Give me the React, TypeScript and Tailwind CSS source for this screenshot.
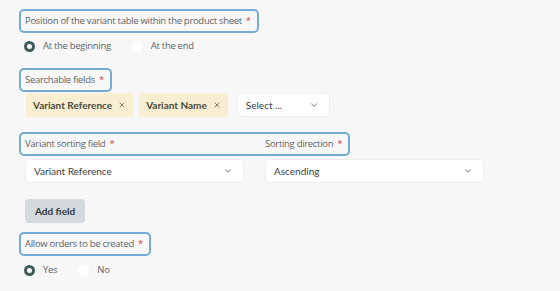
import { ChevronDown, X } from "lucide-react";

const label =
  "font-['Open_Sans',sans-serif] text-[9.5px] leading-4 tracking-[-0.3px] text-[#5f6468]";
const value = "font-['Lato',sans-serif] text-[10px] text-[#3a3d40]";

function Req() {
  return <span className="ml-1 text-[#d0453f]">*</span>;
}

function Outline({ children }: { children: React.ReactNode }) {
  return (
    <div className="flex h-6 w-fit items-center rounded-[5px] border-2 border-[#72acd4] pl-1 pr-1.5">
      {children}
    </div>
  );
}

function Radio({ checked, text }: { checked: boolean; text: string }) {
  return (
    <label className="flex h-4 items-center gap-2">
      <span
        className={
          checked
            ? "h-[11px] w-[11px] rounded-full border-[3px] border-[#3f5b5c] bg-white"
            : "h-[11px] w-[11px] rounded-full bg-white"
        }
      />
      <span className={label + " text-[#3f4447]"}>{text}</span>
    </label>
  );
}

function Chip({ text }: { text: string }) {
  return (
    <span className="flex h-6 items-center gap-1.5 bg-[#f8eed1] px-[7px] font-['Lato',sans-serif] text-[10px] font-bold text-[#4b4a3e]">
      {text}
      <X size={8} strokeWidth={2.5} className="text-[#6b6a5c]" />
    </span>
  );
}

function Select({ text, w }: { text: string; w: string }) {
  return (
    <div
      className={`flex h-6 items-center justify-between rounded-sm border border-[#ededed] bg-white pl-2 pr-2.5 ${w}`}
    >
      <span className={value}>{text}</span>
      <ChevronDown size={10} strokeWidth={2} className="text-[#555]" />
    </div>
  );
}

export default function App() {
  return (
    <div className="h-[291px] w-[560px] bg-[#f7f7f7] pl-[19px] pt-[9px]">
      <Outline>
        <span className={label}>
          Position of the variant table within the product sheet
          <Req />
        </span>
      </Outline>
      <div className="ml-[5px] mt-[5px] flex gap-[21px]">
        <Radio checked text="At the beginning" />
        <Radio checked={false} text="At the end" />
      </div>

      <div className="mt-[14px]">
        <Outline>
          <span className={label}>
            Searchable fields
            <Req />
          </span>
        </Outline>
      </div>
      <div className="ml-[7px] mt-px flex items-center">
        <Chip text="Variant Reference" />
        <span className="ml-1.5">
          <Chip text="Variant Name" />
        </span>
        <div className="ml-[9px]">
          <Select text="Select ..." w="w-[93px]" />
        </div>
      </div>

      <div className="mt-[15px]">
        <Outline>
          <span className={label + " w-[240px]"}>
            Variant sorting field
            <Req />
          </span>
          <span className={label}>
            Sorting direction
            <Req />
          </span>
        </Outline>
      </div>
      <div className="ml-1.5 mt-[3px] flex gap-[21px]">
        <Select text="Variant Reference" w="w-[219px]" />
        <Select text="Ascending" w="w-[219px]" />
      </div>

      <button
        type="button"
        className="ml-1.5 mt-4 block h-6 rounded-sm bg-[#d3d9dc] px-2.5 font-['Lato',sans-serif] text-[10px] font-bold text-[#33383b]"
      >
        Add field
      </button>

      <div className="mt-[9px]">
        <Outline>
          <span className={label}>
            Allow orders to be created
            <Req />
          </span>
        </Outline>
      </div>
      <div className="ml-[5px] mt-[6px] flex gap-[21px]">
        <Radio checked text="Yes" />
        <Radio checked={false} text="No" />
      </div>
    </div>
  );
}
